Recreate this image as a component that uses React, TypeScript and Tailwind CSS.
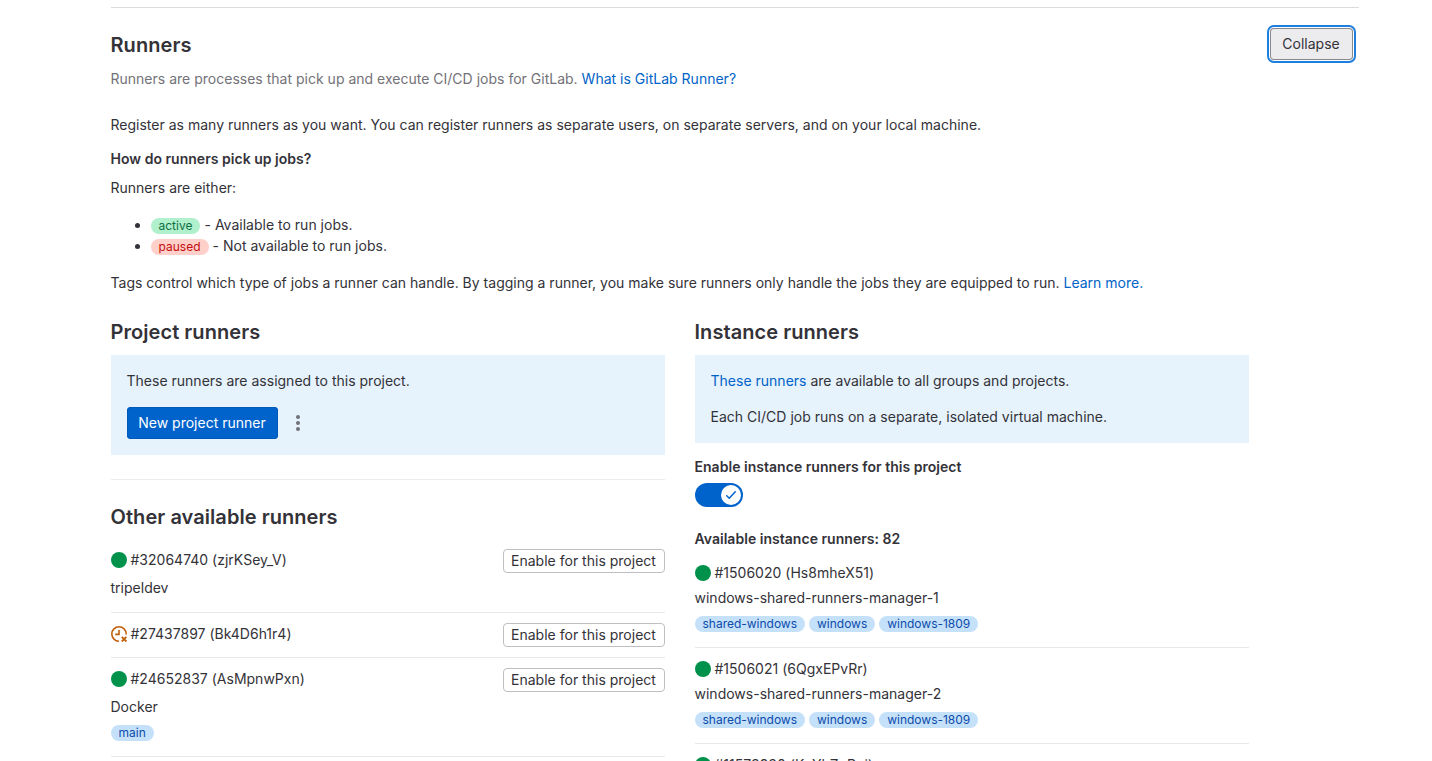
import React from "react";

function StatusOnline() {
  return (
    <svg viewBox="0 0 16 16" className="block size-4 shrink-0" aria-hidden="true">
      <circle cx="8" cy="8" r="8" fill="#00914b" />
    </svg>
  );
}

function StatusStale() {
  return (
    <svg viewBox="0 0 16 16" className="block size-4 shrink-0" fill="none" stroke="#c25f0a" strokeWidth="1.6" aria-hidden="true">
      <path d="M8 15.2A7.2 7.2 0 1 1 15.2 8v.6" />
      <path d="M8 4v4.4H4.2" />
      <path d="m10.8 10.9 4.6 4.6m0-4.6-4.6 4.6" strokeWidth="1.8" />
    </svg>
  );
}

function Tag({ children }: { children: React.ReactNode }) {
  return (
    <span className="flex h-4 items-center rounded-full bg-[#c5e1fa] px-2 text-xs leading-4 tracking-[-0.01px] text-[#0b4bab]">
      {children}
    </span>
  );
}

function EnableButton() {
  return (
    <button className="flex h-6 w-[162px] items-center justify-center rounded border border-[#bfbfc3] bg-white text-sm leading-4 whitespace-nowrap">
      Enable for this project
    </button>
  );
}

const link = "text-[#0063c8]";

type Runner = { id: string; name?: string; tags: string[]; stale?: boolean };

const instanceRunners: Runner[] = [
  { id: "#1506020 (Hs8mheX51)", name: "windows-shared-runners-manager-1", tags: ["shared-windows", "windows", "windows-1809"] },
  { id: "#1506021 (6QgxEPvRr)", name: "windows-shared-runners-manager-2", tags: ["shared-windows", "windows", "windows-1809"] },
  { id: "#11573930 (KzYhZnRpi)", tags: [] },
];

function RunnerTitle({ runner }: { runner: Runner }) {
  return (
    <div className="flex h-5 items-center gap-1">
      {runner.stale ? <StatusStale /> : <StatusOnline />}
      <span>{runner.id}</span>
    </div>
  );
}

export default function App() {
  return (
    <div className="h-[761px] overflow-hidden bg-white pt-[7px] pl-[110.5px] font-['Inter','Noto_Sans',sans-serif] text-sm leading-5 tracking-[0.008px] text-[#333238]">
      <section className="w-[1248px] border-t border-[#dcdcde]">
        <header className="flex h-[107px] items-start justify-between pt-5 pr-[6px]">
          <div>
            <h2 className="mt-[5px] text-xl leading-6 font-semibold tracking-[0.06px]">Runners</h2>
            <p className="mt-3 text-[#737278]">
              Runners are processes that pick up and execute CI/CD jobs for GitLab.{" "}
              <a className={link}>What is GitLab Runner?</a>
            </p>
          </div>
          <button className="h-8 w-[83px] rounded bg-[#ececef] leading-4 shadow-[inset_0_0_0_1px_#89888d,0_0_0_1px_#fff,0_0_0_3px_#1f7fde]">
            Collapse
          </button>
        </header>

        <p>Register as many runners as you want. You can register runners as separate users, on separate servers, and on your local machine.</p>
        <h5 className="mt-[14px] font-semibold tracking-[0.025px]">How do runners pick up jobs?</h5>
        <p className="mt-[9px]">Runners are either:</p>
        <ul className="mt-4 list-disc pl-10">
          <li className="h-[21px] leading-[21px]">
            <span className="mr-1 inline-block h-4 rounded-full bg-[#b1f0cc] px-2 align-middle text-xs leading-4 text-[#0e6f43]">active</span>
            - Available to run jobs.
          </li>
          <li className="h-[21px] leading-[21px]">
            <span className="mr-1 inline-block h-4 rounded-full bg-[#ffcfca] px-2 align-middle text-xs leading-4 text-[#c40d0d]">paused</span>
            - Not available to run jobs.
          </li>
        </ul>
        <p className="mt-[17px]">
          Tags control which type of jobs a runner can handle. By tagging a runner, you make sure runners only handle the jobs they are equipped to run.{" "}
          <a className={link}>Learn more.</a>
        </p>

        <div className="mt-[27px] grid w-[1138px] grid-cols-2 gap-[30px]">
          <div>
            <h4 className="text-xl leading-6 font-semibold tracking-[0.06px]">Project runners</h4>
            <div className="mt-[11px] h-[100px] bg-[#e6f2fc] p-4">
              <p>These runners are assigned to this project.</p>
              <div className="mt-4 flex items-center gap-3">
                <button className="h-8 w-[151px] rounded bg-[#0063cb] leading-4 whitespace-nowrap text-white shadow-[inset_0_0_0_1px_#0058b8]">
                  New project runner
                </button>
                <svg viewBox="0 0 16 16" className="size-4" fill="#737278" aria-hidden="true">
                  <circle cx="8" cy="2" r="2" />
                  <circle cx="8" cy="8" r="2" />
                  <circle cx="8" cy="14" r="2" />
                </svg>
              </div>
            </div>
            <hr className="mt-6 border-[#ececef]" />
            <h4 className="mt-[25px] text-xl leading-6 font-semibold tracking-[0.06px]">Other available runners</h4>
            <ul className="mt-[11px]">
              <li className="flex h-[73px] items-start justify-between border-b border-[#e8e8ec] pt-[9px]">
                <div className="pt-px">
                  <RunnerTitle runner={{ id: "#32064740 (zjrKSey_V)", tags: [] }} />
                  <p className="mt-2">tripeldev</p>
                </div>
                <EnableButton />
              </li>
              <li className="flex h-[45px] items-start justify-between border-b border-[#e8e8ec] pt-[10px]">
                <div className="pt-px">
                  <RunnerTitle runner={{ id: "#27437897 (Bk4D6h1r4)", tags: [], stale: true }} />
                </div>
                <EnableButton />
              </li>
              <li className="flex h-[99px] items-start justify-between border-b border-[#e8e8ec] pt-[10px]">
                <div className="pt-px">
                  <RunnerTitle runner={{ id: "#24652837 (AsMpnwPxn)", tags: [] }} />
                  <p className="mt-2">Docker</p>
                  <div className="mt-2 flex"><Tag>main</Tag></div>
                </div>
                <EnableButton />
              </li>
            </ul>
          </div>

          <div>
            <h4 className="text-xl leading-6 font-semibold tracking-[0.06px]">Instance runners</h4>
            <div className="mt-[11px] h-[88px] bg-[#e6f2fc] p-4">
              <p><a className={link}>These runners</a> are available to all groups and projects.</p>
              <p className="mt-4">Each CI/CD job runs on a separate, isolated virtual machine.</p>
            </div>
            <div className="mt-[14px] font-semibold tracking-[0.03px]">Enable instance runners for this project</div>
            <button className="mt-[6px] flex h-6 w-12 items-center justify-end rounded-full bg-[#0063cb] pr-[2px]" aria-label="Enable instance runners">
              <span className="flex size-5 items-center justify-center rounded-full bg-white">
                <svg viewBox="0 0 16 16" className="size-4" fill="none" stroke="#0063cb" strokeWidth="1.5" strokeLinecap="round" strokeLinejoin="round" aria-hidden="true">
                  <path d="m3.75 8.75 2.5 2.5 6-6.5" />
                </svg>
              </span>
            </button>
            <h5 className="mt-[22px] font-semibold tracking-[0.03px]">Available instance runners: 82</h5>
            <ul className="mt-[3px]">
              {instanceRunners.map((r) => (
                <li key={r.id} className="h-24 border-b border-[#e8e8ec] pt-[11px]">
                  <RunnerTitle runner={r} />
                  {r.name && <p className="mt-[5px]">{r.name}</p>}
                  <div className="mt-2 flex gap-1">
                    {r.tags.map((t) => <Tag key={t}>{t}</Tag>)}
                  </div>
                </li>
              ))}
            </ul>
          </div>
        </div>
      </section>
    </div>
  );
}
